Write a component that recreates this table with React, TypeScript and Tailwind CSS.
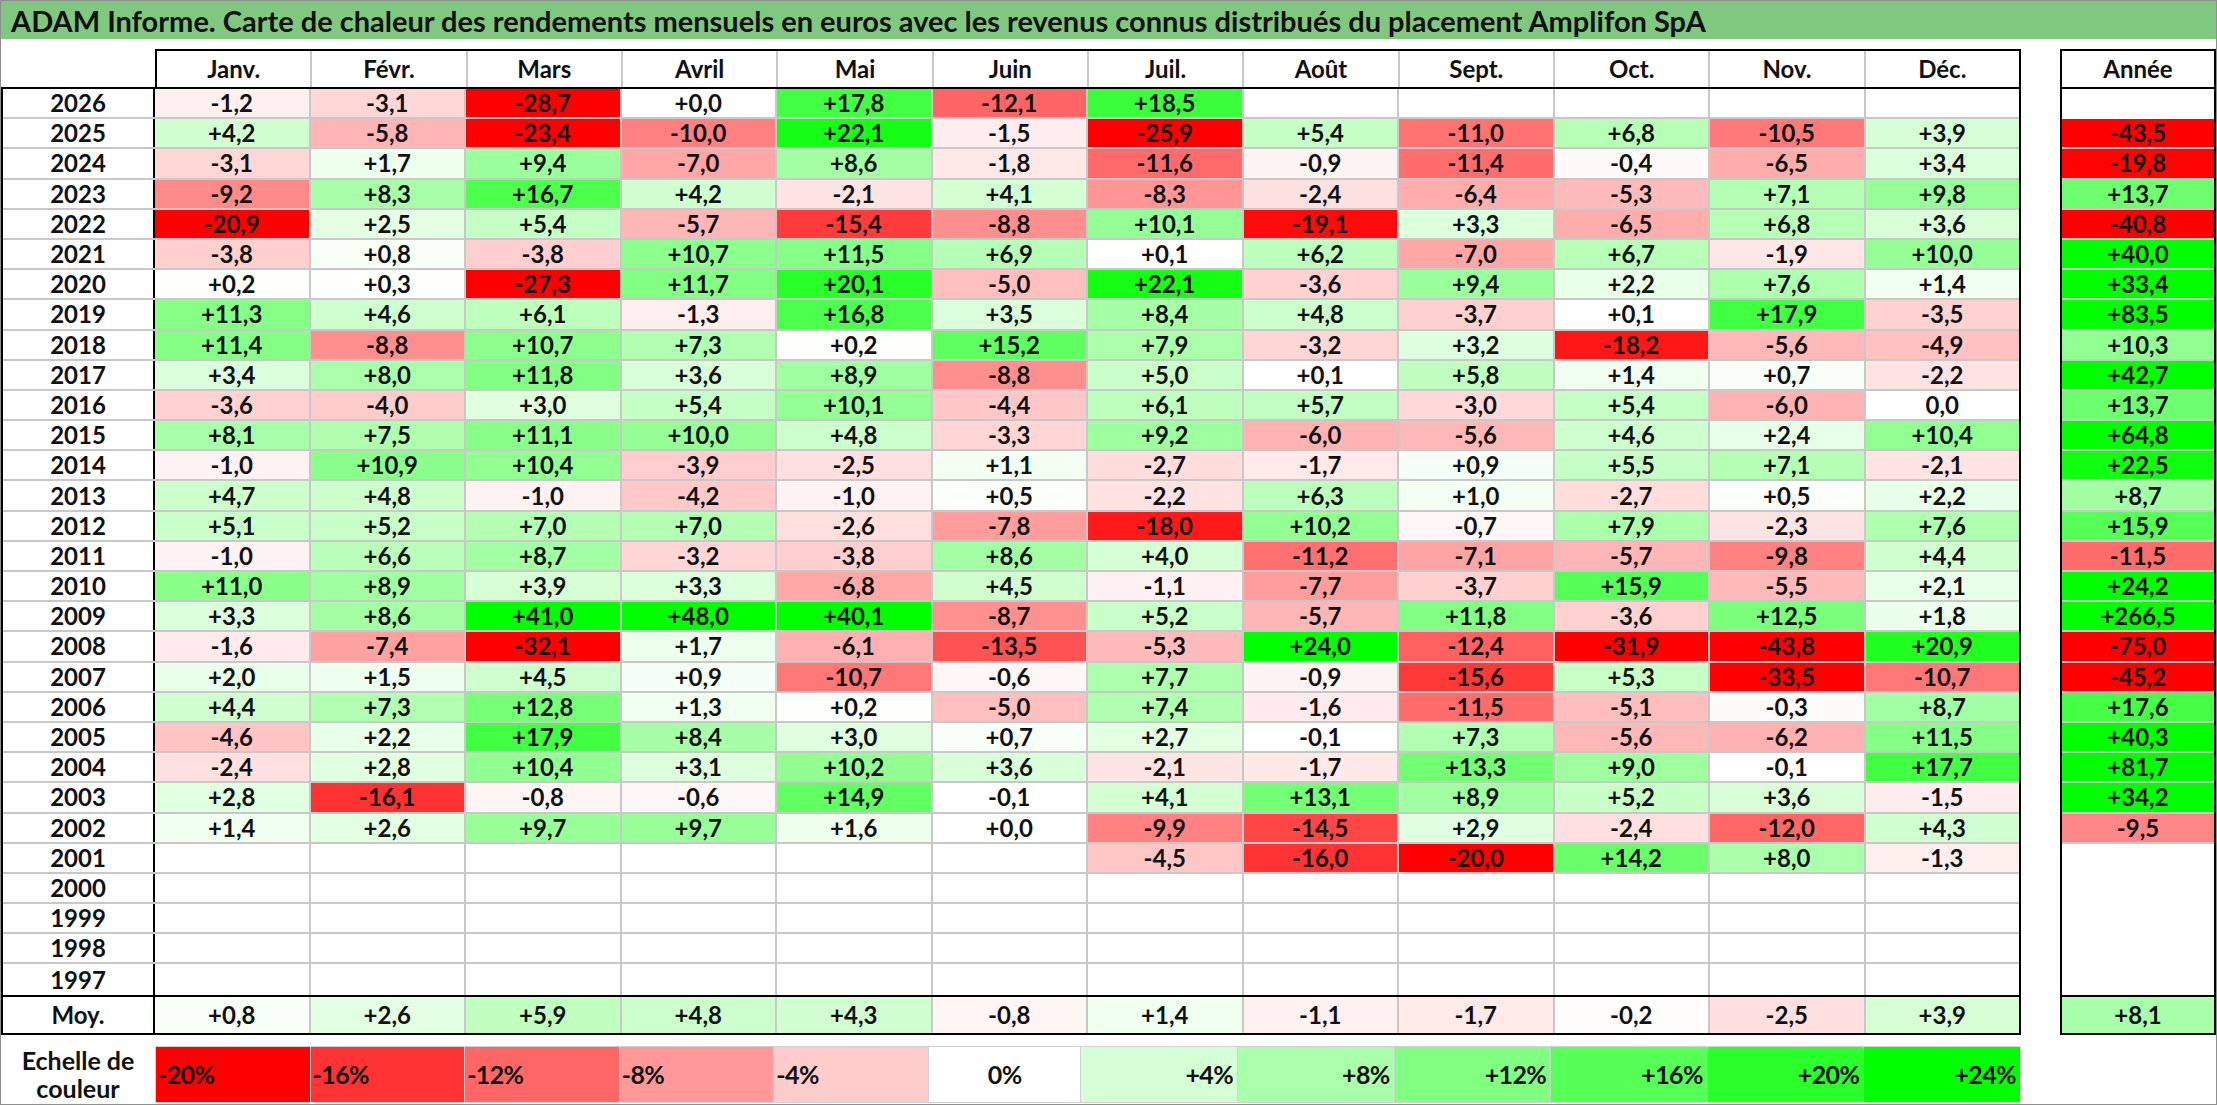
import React from "react";

const months = [
  "Janv.",
  "Févr.",
  "Mars",
  "Avril",
  "Mai",
  "Juin",
  "Juil.",
  "Août",
  "Sept.",
  "Oct.",
  "Nov.",
  "Déc.",
];

// year, 12 monthly returns, yearly return ("" = no data)
const rows: [string, string, string][] = [
  ["2026", "-1,2 -3,1 -28,7 +0,0 +17,8 -12,1 +18,5 _ _ _ _ _", ""],
  ["2025", "+4,2 -5,8 -23,4 -10,0 +22,1 -1,5 -25,9 +5,4 -11,0 +6,8 -10,5 +3,9", "-43,5"],
  ["2024", "-3,1 +1,7 +9,4 -7,0 +8,6 -1,8 -11,6 -0,9 -11,4 -0,4 -6,5 +3,4", "-19,8"],
  ["2023", "-9,2 +8,3 +16,7 +4,2 -2,1 +4,1 -8,3 -2,4 -6,4 -5,3 +7,1 +9,8", "+13,7"],
  ["2022", "-20,9 +2,5 +5,4 -5,7 -15,4 -8,8 +10,1 -19,1 +3,3 -6,5 +6,8 +3,6", "-40,8"],
  ["2021", "-3,8 +0,8 -3,8 +10,7 +11,5 +6,9 +0,1 +6,2 -7,0 +6,7 -1,9 +10,0", "+40,0"],
  ["2020", "+0,2 +0,3 -27,3 +11,7 +20,1 -5,0 +22,1 -3,6 +9,4 +2,2 +7,6 +1,4", "+33,4"],
  ["2019", "+11,3 +4,6 +6,1 -1,3 +16,8 +3,5 +8,4 +4,8 -3,7 +0,1 +17,9 -3,5", "+83,5"],
  ["2018", "+11,4 -8,8 +10,7 +7,3 +0,2 +15,2 +7,9 -3,2 +3,2 -18,2 -5,6 -4,9", "+10,3"],
  ["2017", "+3,4 +8,0 +11,8 +3,6 +8,9 -8,8 +5,0 +0,1 +5,8 +1,4 +0,7 -2,2", "+42,7"],
  ["2016", "-3,6 -4,0 +3,0 +5,4 +10,1 -4,4 +6,1 +5,7 -3,0 +5,4 -6,0 0,0", "+13,7"],
  ["2015", "+8,1 +7,5 +11,1 +10,0 +4,8 -3,3 +9,2 -6,0 -5,6 +4,6 +2,4 +10,4", "+64,8"],
  ["2014", "-1,0 +10,9 +10,4 -3,9 -2,5 +1,1 -2,7 -1,7 +0,9 +5,5 +7,1 -2,1", "+22,5"],
  ["2013", "+4,7 +4,8 -1,0 -4,2 -1,0 +0,5 -2,2 +6,3 +1,0 -2,7 +0,5 +2,2", "+8,7"],
  ["2012", "+5,1 +5,2 +7,0 +7,0 -2,6 -7,8 -18,0 +10,2 -0,7 +7,9 -2,3 +7,6", "+15,9"],
  ["2011", "-1,0 +6,6 +8,7 -3,2 -3,8 +8,6 +4,0 -11,2 -7,1 -5,7 -9,8 +4,4", "-11,5"],
  ["2010", "+11,0 +8,9 +3,9 +3,3 -6,8 +4,5 -1,1 -7,7 -3,7 +15,9 -5,5 +2,1", "+24,2"],
  ["2009", "+3,3 +8,6 +41,0 +48,0 +40,1 -8,7 +5,2 -5,7 +11,8 -3,6 +12,5 +1,8", "+266,5"],
  ["2008", "-1,6 -7,4 -32,1 +1,7 -6,1 -13,5 -5,3 +24,0 -12,4 -31,9 -43,8 +20,9", "-75,0"],
  ["2007", "+2,0 +1,5 +4,5 +0,9 -10,7 -0,6 +7,7 -0,9 -15,6 +5,3 -33,5 -10,7", "-45,2"],
  ["2006", "+4,4 +7,3 +12,8 +1,3 +0,2 -5,0 +7,4 -1,6 -11,5 -5,1 -0,3 +8,7", "+17,6"],
  ["2005", "-4,6 +2,2 +17,9 +8,4 +3,0 +0,7 +2,7 -0,1 +7,3 -5,6 -6,2 +11,5", "+40,3"],
  ["2004", "-2,4 +2,8 +10,4 +3,1 +10,2 +3,6 -2,1 -1,7 +13,3 +9,0 -0,1 +17,7", "+81,7"],
  ["2003", "+2,8 -16,1 -0,8 -0,6 +14,9 -0,1 +4,1 +13,1 +8,9 +5,2 +3,6 -1,5", "+34,2"],
  ["2002", "+1,4 +2,6 +9,7 +9,7 +1,6 +0,0 -9,9 -14,5 +2,9 -2,4 -12,0 +4,3", "-9,5"],
  ["2001", "_ _ _ _ _ _ -4,5 -16,0 -20,0 +14,2 +8,0 -1,3", ""],
  ["2000", "_ _ _ _ _ _ _ _ _ _ _ _", ""],
  ["1999", "_ _ _ _ _ _ _ _ _ _ _ _", ""],
  ["1998", "_ _ _ _ _ _ _ _ _ _ _ _", ""],
  ["1997", "_ _ _ _ _ _ _ _ _ _ _ _", ""],
];

const averages = "+0,8 +2,6 +5,9 +4,8 +4,3 -0,8 +1,4 -1,1 -1,7 -0,2 -2,5 +3,9".split(" ");
const averageYear = "+8,1";

const scale = ["-20%", "-16%", "-12%", "-8%", "-4%", "0%", "+4%", "+8%", "+12%", "+16%", "+20%", "+24%"];
const scaleColors = [
  "#ff0000",
  "#ff3333",
  "#ff6666",
  "#ff9999",
  "#ffcccc",
  "#ffffff",
  "#d5ffd5",
  "#aaffaa",
  "#80ff80",
  "#55ff55",
  "#2bff2b",
  "#00ff00",
];

// red saturates at -20 %, green at +24 %
const heat = (text: string) => {
  if (!text || text === "_") return "#ffffff";
  const v = parseFloat(text.replace(",", "."));
  if (v < 0) {
    const c = Math.round(255 * (1 - Math.min(-v / 20, 1)));
    return `rgb(255,${c},${c})`;
  }
  const c = Math.round(255 * (1 - Math.min(v / 24, 1)));
  return `rgb(${c},255,${c})`;
};

const clean = (text: string) => (text === "_" ? "" : text);

export default function App() {
  return (
    <div className="h-[1105px] w-[2217px] overflow-hidden border border-[#8f8f8f] bg-white font-['Lato',sans-serif] font-bold text-[#111]">
      <div className="flex h-[38px] items-center bg-[#80c880] pl-[10px] text-[29px] leading-none">
        ADAM Informe. Carte de chaleur des rendements mensuels en euros avec les revenus connus
        distribués du placement Amplifon SpA
      </div>

      <div className="mt-[10px] flex text-[24px] leading-none">
        {/* left table: years + months */}
        <div className="flex w-[2020px] flex-col">
          <div className="flex h-[38px]">
            <div className="w-[154px]" />
            <div className="flex flex-1 border-x-2 border-t-2 border-black">
              {months.map((m, i) => (
                <div
                  key={m}
                  className={`flex flex-1 items-center justify-center ${i < 11 ? "border-r-2 border-[#c8c8c8]" : ""}`}
                >
                  {m}
                </div>
              ))}
            </div>
          </div>

          <div className="flex flex-col border-2 border-black">
            {rows.map(([year, values], r) => (
              <div
                key={year}
                className={`flex h-[30.2px] ${r < rows.length - 1 ? "border-b-2 border-[#c8c8c8]" : ""}`}
              >
                <div className="flex w-[152px] items-center justify-center border-r-2 border-black">
                  {year}
                </div>
                {values.split(" ").map((v, i) => (
                  <div
                    key={i}
                    className={`flex flex-1 items-center justify-center ${i < 11 ? "border-r-2 border-[#c8c8c8]" : ""}`}
                    style={{ backgroundColor: heat(v) }}
                  >
                    {clean(v)}
                  </div>
                ))}
              </div>
            ))}
            <div className="flex h-[38px] border-t-2 border-black">
              <div className="flex w-[152px] items-center justify-center border-r-2 border-black">
                Moy.
              </div>
              {averages.map((v, i) => (
                <div
                  key={i}
                  className={`flex flex-1 items-center justify-center ${i < 11 ? "border-r-2 border-[#c8c8c8]" : ""}`}
                  style={{ backgroundColor: heat(v) }}
                >
                  {v}
                </div>
              ))}
            </div>
          </div>
        </div>

        <div className="w-[39px]" />

        {/* yearly column */}
        <div className="flex w-[156px] flex-col border-2 border-black">
          <div className="flex h-[38px] items-center justify-center border-b-2 border-black">
            Année
          </div>
          {rows.map(([year, , total], r) => (
            <div
              key={year}
              className={`flex h-[30.2px] items-center justify-center ${r < rows.length - 1 && total ? "border-b-2 border-[#c8c8c8]" : ""}`}
              style={{ backgroundColor: heat(total) }}
            >
              {total}
            </div>
          ))}
          <div
            className="flex h-[38px] items-center justify-center border-t-2 border-black"
            style={{ backgroundColor: heat(averageYear) }}
          >
            {averageYear}
          </div>
        </div>
      </div>

      <div className="mt-[11px] flex h-[57px] text-[25px] leading-none">
        <div className="flex w-[154px] flex-col items-center justify-center text-[25px] leading-[28px]">
          <span>Echelle de</span>
          <span>couleur</span>
        </div>
        <div className="flex w-[1866px] border border-[#d0d0d0]">
          {scale.map((s, i) => (
            <div
              key={s}
              className={`flex flex-1 items-center tracking-tight ${i < 11 ? "border-r border-[#d0d0d0]" : ""} ${
                i < 5 ? "justify-start pl-[2px]" : i === 5 ? "justify-center" : "justify-end pr-[4px]"
              }`}
              style={{ backgroundColor: scaleColors[i] }}
            >
              {s}
            </div>
          ))}
        </div>
      </div>
    </div>
  );
}
